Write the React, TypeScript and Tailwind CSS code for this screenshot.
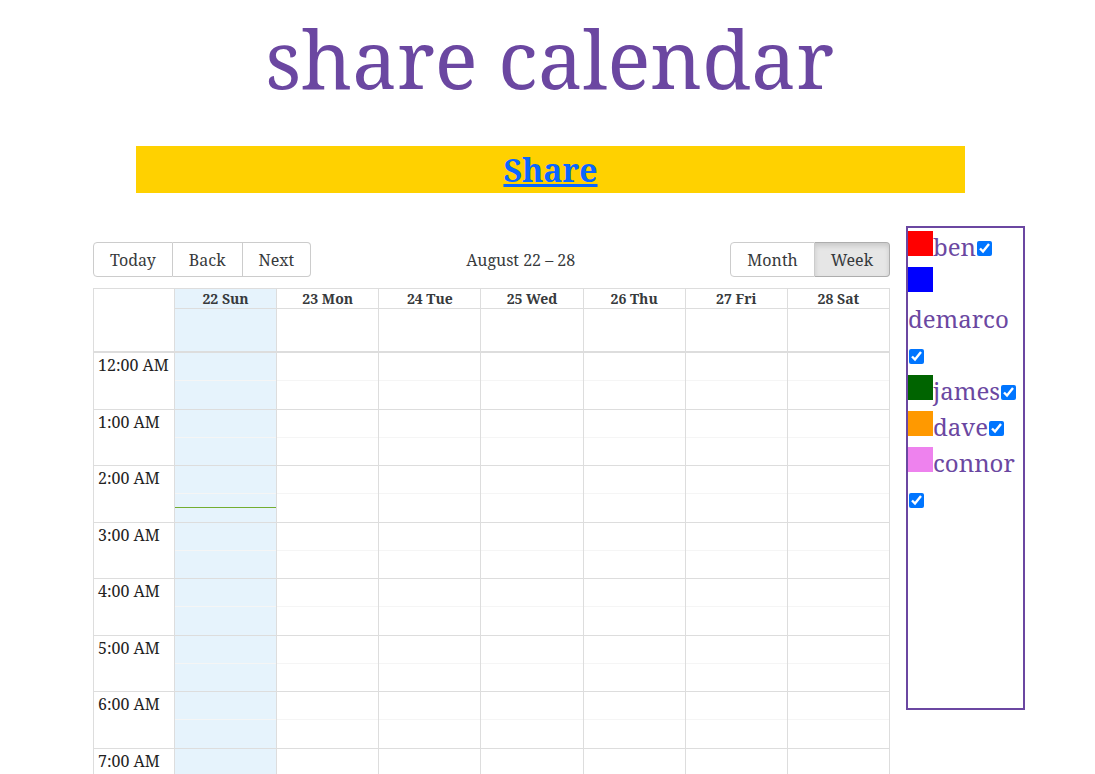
import React from 'react'

const days = ['22 Sun', '23 Mon', '24 Tue', '25 Wed', '26 Thu', '27 Fri', '28 Sat']
const hours = Array.from({ length: 24 }, (_, i) => `${i % 12 === 0 ? 12 : i % 12}:00 ${i < 12 ? 'AM' : 'PM'}`)

const people = [
  { name: 'ben', color: 'bg-[#ff0000]' },
  { name: 'demarco', color: 'bg-[#0000ff]' },
  { name: 'james', color: 'bg-[#006400]' },
  { name: 'dave', color: 'bg-[#ff9900]' },
  { name: 'connor', color: 'bg-[#ee82ee]' },
]

const font = { fontFamily: '"Noto Serif", "DejaVu Serif", serif' }

const Toolbar: React.FC = () => (
  <div className="flex items-center mb-[11px] text-[16px] text-[#373a3c]">
    <div className="flex">
      <button className="h-[35px] px-[16px] border border-[#ccc] rounded-l-[4px]">Today</button>
      <button className="h-[35px] px-[16px] border border-l-0 border-[#ccc]">Back</button>
      <button className="h-[35px] px-[16px] border border-l-0 border-[#ccc] rounded-r-[4px]">Next</button>
    </div>
    <span className="flex-1 text-center px-[10px]">August 22 – 28</span>
    <div className="flex">
      <button className="h-[35px] px-[16px] border border-[#ccc] rounded-l-[4px]">Month</button>
      <button className="h-[35px] px-[16px] border border-l-0 border-[#adadad] bg-[#e6e6e6] rounded-r-[4px] shadow-[inset_0_3px_5px_rgba(0,0,0,0.125)]">
        Week
      </button>
    </div>
  </div>
)

const Calendar: React.FC = () => (
  <div className="w-[797px] text-[#373a3c]">
    <Toolbar />
    <div className="border border-[#ddd]">
      {/* header */}
      <div className="flex">
        <div className="w-[81px] shrink-0 border-r border-[#ddd]">
          <div className="h-[20px]" />
          <div className="h-[42px]" />
        </div>
        {days.map((d, i) => (
          <div key={d} className={`flex-1 ${i > 0 ? 'border-l border-[#ddd]' : ''} ${i === 0 ? 'bg-[#e6f3fc]' : ''}`}>
            <div className="h-[20px] border-b border-[#ddd] text-center text-[14px] font-bold leading-[19px]">{d}</div>
            <div className="h-[42px]" />
          </div>
        ))}
      </div>
      {/* body */}
      <div className="flex border-t-2 border-[#ddd]">
        <div className="w-[81px] shrink-0 border-r border-[#ddd]">
          {hours.map(h => (
            <div key={h} className="h-[56.5px] border-b border-[#ddd] px-[4px] text-[16px] leading-[24px] whitespace-nowrap text-[#222]">
              {h}
            </div>
          ))}
        </div>
        {days.map((d, i) => (
          <div key={d} className={`relative flex-1 ${i > 0 ? 'border-l border-[#ddd]' : ''} ${i === 0 ? 'bg-[#e6f3fc]' : ''}`}>
            {hours.map(h => (
              <div key={h} className="h-[56.5px] border-b border-[#ddd] flex flex-col">
                <div className="flex-1 border-b border-[#f5f5f5]" />
                <div className="flex-1" />
              </div>
            ))}
            {i === 0 && <div className="absolute left-0 right-0 top-[154px] h-px bg-[#74ad31]" />}
          </div>
        ))}
      </div>
    </div>
  </div>
)

const Sidebar: React.FC = () => (
  <div className="w-[119px] h-[484px] border-2 border-[#6b47a1] text-[#6b47a1] text-[24px] leading-[36px] pt-[1px]">
    {people.map(p => (
      <div key={p.name}>
        <span className={`inline-block w-[25px] h-[25px] ${p.color}`} />
        <span>{p.name}</span>
        <input type="checkbox" defaultChecked className="w-[15px] h-[15px] m-[3px_3px_3px_1px] align-[0px]" />
      </div>
    ))}
  </div>
)

export default function App() {
  return (
    <div style={font} className="bg-white min-h-screen">
      <h1 className="text-center text-[80px] leading-[110px] text-[#6b47a1] pt-[3px] pl-[4px]">share calendar</h1>
      <div className="ml-[136px] w-[829px] h-[47px] mt-[33px] bg-[#ffd100] flex items-center justify-center">
        <a href="#" className="text-[#0a66ff] underline font-bold text-[32px]">Share</a>
      </div>
      <div className="flex gap-[16px] pl-[93px] mt-[33px]">
        <div className="mt-[16px]">
          <Calendar />
        </div>
        <Sidebar />
      </div>
    </div>
  )
}
